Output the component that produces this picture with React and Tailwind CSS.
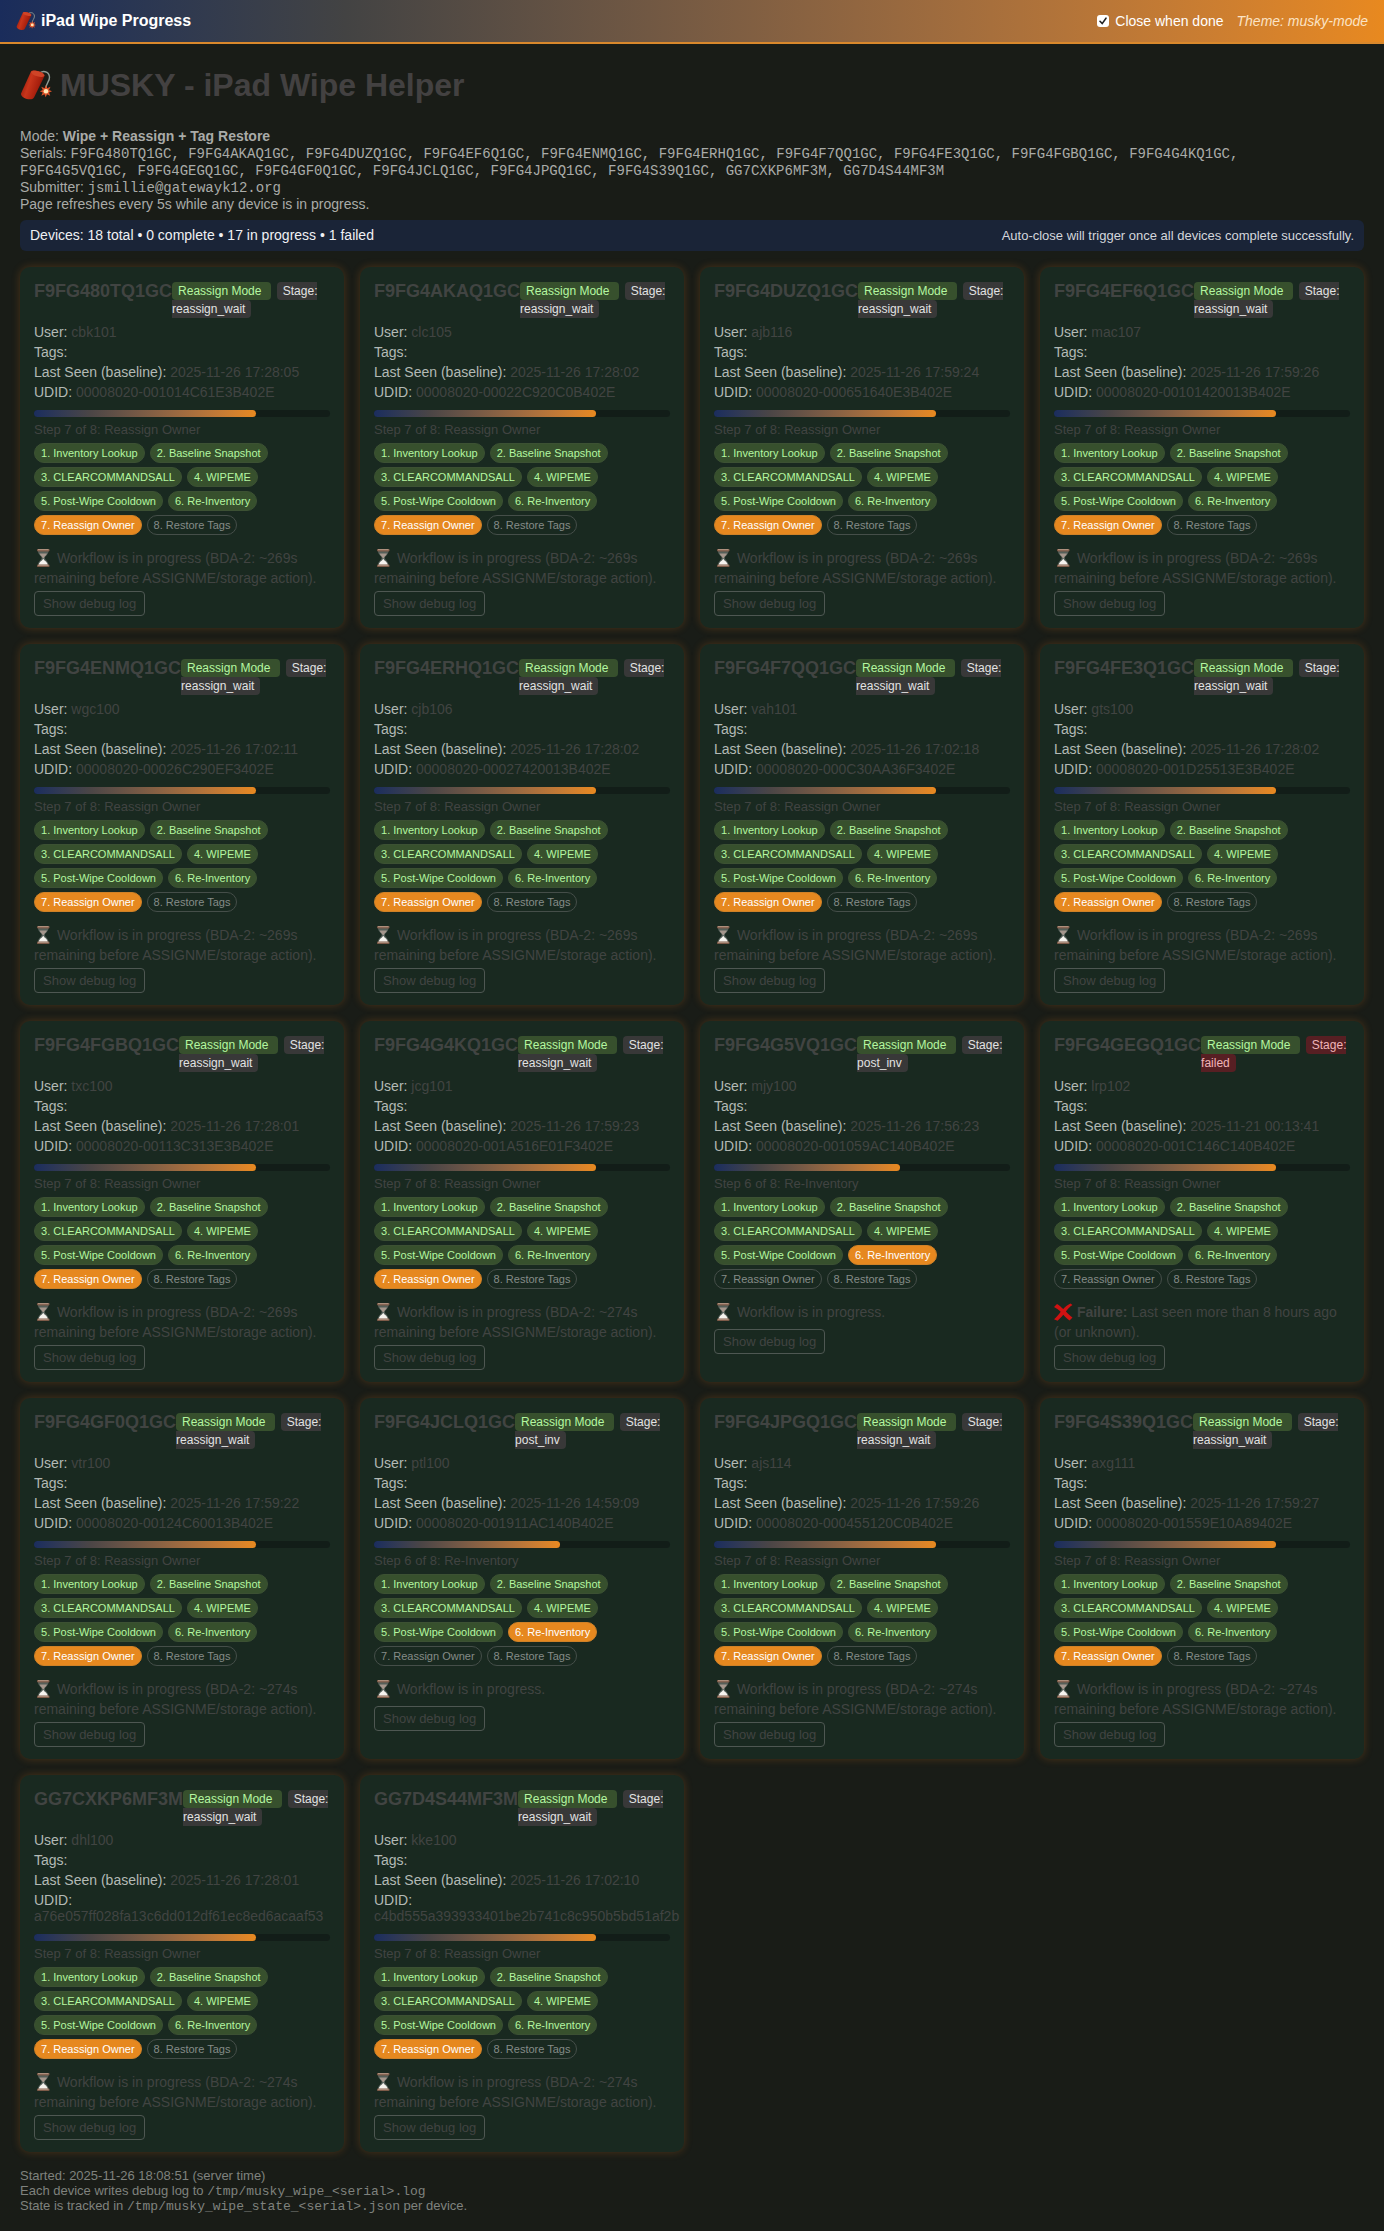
import { useState } from "react";
import clsx from "clsx";

const STEPS = [
  "Inventory Lookup",
  "Baseline Snapshot",
  "CLEARCOMMANDSALL",
  "WIPEME",
  "Post-Wipe Cooldown",
  "Re-Inventory",
  "Reassign Owner",
  "Restore Tags",
];

const DEVICES = [
  { serial: "F9FG480TQ1GC", user: "cbk101", seen: "2025-11-26 17:28:05", udid: "00008020-001014C61E3B402E", stage: "reassign_wait", wait: 269 },
  { serial: "F9FG4AKAQ1GC", user: "clc105", seen: "2025-11-26 17:28:02", udid: "00008020-00022C920C0B402E", stage: "reassign_wait", wait: 269 },
  { serial: "F9FG4DUZQ1GC", user: "ajb116", seen: "2025-11-26 17:59:24", udid: "00008020-000651640E3B402E", stage: "reassign_wait", wait: 269 },
  { serial: "F9FG4EF6Q1GC", user: "mac107", seen: "2025-11-26 17:59:26", udid: "00008020-00101420013B402E", stage: "reassign_wait", wait: 269 },
  { serial: "F9FG4ENMQ1GC", user: "wgc100", seen: "2025-11-26 17:02:11", udid: "00008020-00026C290EF3402E", stage: "reassign_wait", wait: 269 },
  { serial: "F9FG4ERHQ1GC", user: "cjb106", seen: "2025-11-26 17:28:02", udid: "00008020-00027420013B402E", stage: "reassign_wait", wait: 269 },
  { serial: "F9FG4F7QQ1GC", user: "vah101", seen: "2025-11-26 17:02:18", udid: "00008020-000C30AA36F3402E", stage: "reassign_wait", wait: 269 },
  { serial: "F9FG4FE3Q1GC", user: "gts100", seen: "2025-11-26 17:28:02", udid: "00008020-001D25513E3B402E", stage: "reassign_wait", wait: 269 },
  { serial: "F9FG4FGBQ1GC", user: "txc100", seen: "2025-11-26 17:28:01", udid: "00008020-00113C313E3B402E", stage: "reassign_wait", wait: 269 },
  { serial: "F9FG4G4KQ1GC", user: "jcg101", seen: "2025-11-26 17:59:23", udid: "00008020-001A516E01F3402E", stage: "reassign_wait", wait: 274 },
  { serial: "F9FG4G5VQ1GC", user: "mjy100", seen: "2025-11-26 17:56:23", udid: "00008020-001059AC140B402E", stage: "post_inv" },
  { serial: "F9FG4GEGQ1GC", user: "lrp102", seen: "2025-11-21 00:13:41", udid: "00008020-001C146C140B402E", stage: "failed" },
  { serial: "F9FG4GF0Q1GC", user: "vtr100", seen: "2025-11-26 17:59:22", udid: "00008020-00124C60013B402E", stage: "reassign_wait", wait: 274 },
  { serial: "F9FG4JCLQ1GC", user: "ptl100", seen: "2025-11-26 14:59:09", udid: "00008020-001911AC140B402E", stage: "post_inv" },
  { serial: "F9FG4JPGQ1GC", user: "ajs114", seen: "2025-11-26 17:59:26", udid: "00008020-000455120C0B402E", stage: "reassign_wait", wait: 274 },
  { serial: "F9FG4S39Q1GC", user: "axg111", seen: "2025-11-26 17:59:27", udid: "00008020-001559E10A89402E", stage: "reassign_wait", wait: 274 },
  { serial: "GG7CXKP6MF3M", user: "dhl100", seen: "2025-11-26 17:28:01", udid: "a76e057ff028fa13c6dd012df61ec8ed6acaaf53", stage: "reassign_wait", wait: 274 },
  { serial: "GG7D4S44MF3M", user: "kke100", seen: "2025-11-26 17:02:10", udid: "c4bd555a393933401be2b741c8c950b5bd51af2b", stage: "reassign_wait", wait: 274 },
];

const STAGE_PROGRESS = {
  reassign_wait: { step: 7, percent: 75 },
  post_inv: { step: 6, percent: 63 },
  failed: { step: 7, percent: 75 },
};

function Firecracker({ className }) {
  return (
    <svg viewBox="0 0 32 32" className={className} aria-hidden="true">
      <defs>
        <linearGradient id="stick" x1="0" y1="0.3" x2="1" y2="0.7">
          <stop offset="0" stopColor="#8e1608" />
          <stop offset="0.35" stopColor="#c9351b" />
          <stop offset="0.7" stopColor="#a8200e" />
          <stop offset="1" stopColor="#6f0f06" />
        </linearGradient>
      </defs>
      <path d="M19 5C22 1 29 2 29.5 8c.3 5-4 6-3.500 12" fill="none" stroke="#8f9a94" strokeWidth="1.400" />
      <path d="M11 2.500C13-.2 25 3 24.500 7L14 28.500c-2 4-13.500 1-13-4z" fill="url(#stick)" />
      <ellipse cx="17.800" cy="4.800" rx="6.900" ry="2.600" transform="rotate(16 17.800 4.800)" fill="#cf4427" />
      <path d="M26 16l1.200 3.300 3.300-1.600-1.500 3.300 3 1.200-3 1.300 1.200 3.200-3.200-1.400-1.300 3-1.200-3-3.200 1.400 1.500-3.300-3-1.200 3-1.200-1.500-3.300 3.300 1.600z" fill="#e0542a" />
      <circle cx="26" cy="22.200" r="2.300" fill="#ffe9b8" />
    </svg>
  );
}

function Hourglass() {
  return (
    <svg viewBox="0 0 19 21" className="inline h-[21px] w-[19px] align-[-7px]" aria-hidden="true">
      <path d="M4 2h10.500c0 3.800-3.700 5-3.700 7s3.700 3.200 3.700 7H4c0-3.800 3.700-5 3.700-7S4 5.800 4 2z" fill="#8f9692" fillOpacity="0.500" />
      <path d="M5.500 4.500h7.500c-.8 2.200-2.800 2.900-3.200 4.500h-1.100C8.300 7.400 6.300 6.700 5.500 4.500z" fill="#a5968c" />
      <path d="M9.250 9.500c.6 2.200 4.250 3.200 4.450 6.500H4.800c.2-3.300 3.850-4.300 4.450-6.500z" fill="#f5f3ee" />
      <rect x="3" y="0" width="12.500" height="2.400" rx="0.800" fill="#7d5a48" />
      <rect x="3" y="15.600" width="12.500" height="2.400" rx="0.800" fill="#7d5a48" />
      <path d="M4 .7h10.500M4 16.300h10.500" stroke="#d3b8a6" strokeWidth="0.700" />
    </svg>
  );
}

function CrossMark() {
  return (
    <svg viewBox="0 0 19 21" className="inline h-[21px] w-[19px] align-[-7px]" aria-hidden="true">
      <path
        d="M0 4L3 1c2.200 1.300 4.400 3.300 6.200 5C11 4 13.500 2 16.400.6L18.500 2c-2.500 1.600-5 4-6.600 6.500 2.200 2.300 4.300 4.500 6.600 6L15.600 17.500c-2.300-1.500-4.700-3.800-6.300-5.700C7.400 14 5.400 16.200 3.500 17.800L0 16.300c2.200-2 5-5 6.700-7.600C4.500 6.800 2.200 5 0 4z"
        fill="#cf1212"
      />
    </svg>
  );
}

function Code({ children }) {
  return <code className="font-['Liberation_Mono',monospace] leading-none">{children}</code>;
}

function Field({ label, value }) {
  return (
    <div className="mb-1">
      <span className="text-[#b3b9b5]">{label}:</span> {value}
    </div>
  );
}

function StatusMessage({ device }) {
  if (device.stage === "failed") {
    return (
      <>
        <CrossMark /> <strong>Failure:</strong> Last seen more than 8 hours ago (or unknown).
      </>
    );
  }

  return (
    <>
      <Hourglass />{" "}
      {device.wait
        ? `Workflow is in progress (BDA-2: ~${device.wait}s remaining before ASSIGNME/storage action).`
        : "Workflow is in progress."}
    </>
  );
}

function DeviceCard({ device }) {
  const { step, percent } = STAGE_PROGRESS[device.stage];
  const failed = device.stage === "failed";

  return (
    <article className="min-w-0 rounded-[10px] bg-[#192920] px-[14px] pt-[14px] pb-3 text-sm leading-4 text-[#414442] shadow-[0_0_8px_rgba(230,125,30,0.25)]">
      <div className="flex justify-between">
        <h2 className="text-lg leading-5 font-bold">{device.serial}</h2>
        <div className="grow pt-px text-xs leading-[18px]">
          <span className="rounded bg-[#37502d] px-1.5 py-0.5 text-[#b4f7a0]">Reassign Mode </span>
          <span
            className={clsx(
              "ml-1.5 rounded px-1.5 py-0.5",
              failed ? "bg-[#571f23] text-[#f0b4b8]" : "bg-[#383838] text-[#e2e2e2]"
            )}
          >
            Stage: {device.stage}
          </span>
        </div>
      </div>

      <div className="mt-1.5">
        <Field label="User" value={device.user} />
        <Field label="Tags" />
        <Field label="Last Seen (baseline)" value={device.seen} />
        <Field label="UDID" value={device.udid} />
      </div>

      <div className="mt-[10px] h-[7px] rounded-full bg-[#121d18]">
        <div
          className="h-full rounded-full bg-linear-to-r from-[#1b2d5e] via-[#4a4546] via-25% to-[#e8891f]"
          style={{ width: `${percent}%` }}
        />
      </div>

      <p className="mt-[5px] text-[13px]">
        Step {step} of 8: {STEPS[step - 1]}
      </p>

      <ol className="mt-[5px] flex flex-wrap gap-x-[5px] gap-y-1 text-[11px]">
        {STEPS.map((name, i) => {
          const number = i + 1;
          const current = number === step && !failed;
          return (
            <li
              key={name}
              className={clsx(
                "rounded-full border px-1.5 py-px",
                current && "border-[#cf8127] bg-[#e6881f] text-white",
                number < step && "border-[#3c5133] bg-[#37502d] text-[#b4f7a0]",
                number >= step && !current && "border-[#454e49] text-[#858c88]"
              )}
            >
              {number}. {name}
            </li>
          );
        })}
      </ol>

      <p className="mt-[14px]">
        <StatusMessage device={device} />
      </p>

      <button
        type="button"
        className="mt-[5px] block rounded border border-[#4e5752] px-2 py-1 text-[13px] leading-[15px]"
      >
        Show debug log
      </button>
    </article>
  );
}

export default function App() {
  const [closeWhenDone, setCloseWhenDone] = useState(true);
  const failedCount = DEVICES.filter((d) => d.stage === "failed").length;

  return (
    <div className="min-h-screen bg-[#191c17] font-['Liberation_Sans',Arial,sans-serif]">
      <header className="flex h-11 items-center justify-between border-b-2 border-[#d9882c] bg-linear-to-r from-[#1a2c5b] via-[#434343] via-25% to-[#e8891f] px-4 text-white">
        <div className="flex items-center gap-[5px] font-bold">
          <Firecracker className="size-5" />
          iPad Wipe Progress
        </div>
        <div className="flex items-center gap-[13px] text-sm">
          <label className="flex items-center gap-1.5">
            <span className="relative flex size-3">
              <input
                type="checkbox"
                checked={closeWhenDone}
                onChange={(e) => setCloseWhenDone(e.target.checked)}
                className="peer size-3 appearance-none rounded-[3px] bg-white"
              />
              <svg
                viewBox="0 0 12 12"
                className="pointer-events-none absolute inset-0 hidden size-3 peer-checked:block"
                aria-hidden="true"
              >
                <path d="M3 6.300l2.200 2.300L9 3.200" fill="none" stroke="#222" strokeWidth="1.600" strokeLinecap="round" />
              </svg>
            </span>
            Close when done
          </label>
          <span className="text-[#fbe3c5] italic">Theme: musky-mode</span>
        </div>
      </header>

      <main className="px-5 pt-5 pb-4">
        <h1 className="flex items-center gap-2 text-[32px] leading-[42px] font-bold text-[#434141]">
          <Firecracker className="size-8" />
          MUSKY - iPad Wipe Helper
        </h1>

        <div className="mt-[22px] pr-8 text-sm leading-[17px] text-[#a9aba8]">
          <div>
            Mode: <strong>Wipe + Reassign + Tag Restore</strong>
          </div>
          <div>
            Serials: <Code>{DEVICES.map((d) => d.serial).join(", ")}</Code>
          </div>
          <div>
            Submitter: <Code>jsmillie@gatewayk12.org</Code>
          </div>
          <div>Page refreshes every 5s while any device is in progress.</div>
        </div>

        <div className="mt-[7px] flex items-center justify-between rounded-md bg-[#1a2437] px-[10px] py-2 text-sm leading-[15px] text-[#f0f1f4]">
          <span>
            Devices: {DEVICES.length} total • 0 complete • {DEVICES.length - failedCount} in progress • {failedCount} failed
          </span>
          <span className="text-[13px] text-[#d3d6dc]">
            Auto-close will trigger once all devices complete successfully.
          </span>
        </div>

        <section className="mt-4 grid grid-cols-[repeat(auto-fill,minmax(320px,1fr))] gap-4">
          {DEVICES.map((device) => (
            <DeviceCard key={device.serial} device={device} />
          ))}
        </section>

        <footer className="mt-4 text-[13px] leading-[15px] text-[#7f827e]">
          <div>Started: 2025-11-26 18:08:51 (server time)</div>
          <div>
            Each device writes debug log to <Code>/tmp/musky_wipe_&lt;serial&gt;.log</Code>
          </div>
          <div>
            State is tracked in <Code>/tmp/musky_wipe_state_&lt;serial&gt;.json</Code> per device.
          </div>
        </footer>
      </main>
    </div>
  );
}
